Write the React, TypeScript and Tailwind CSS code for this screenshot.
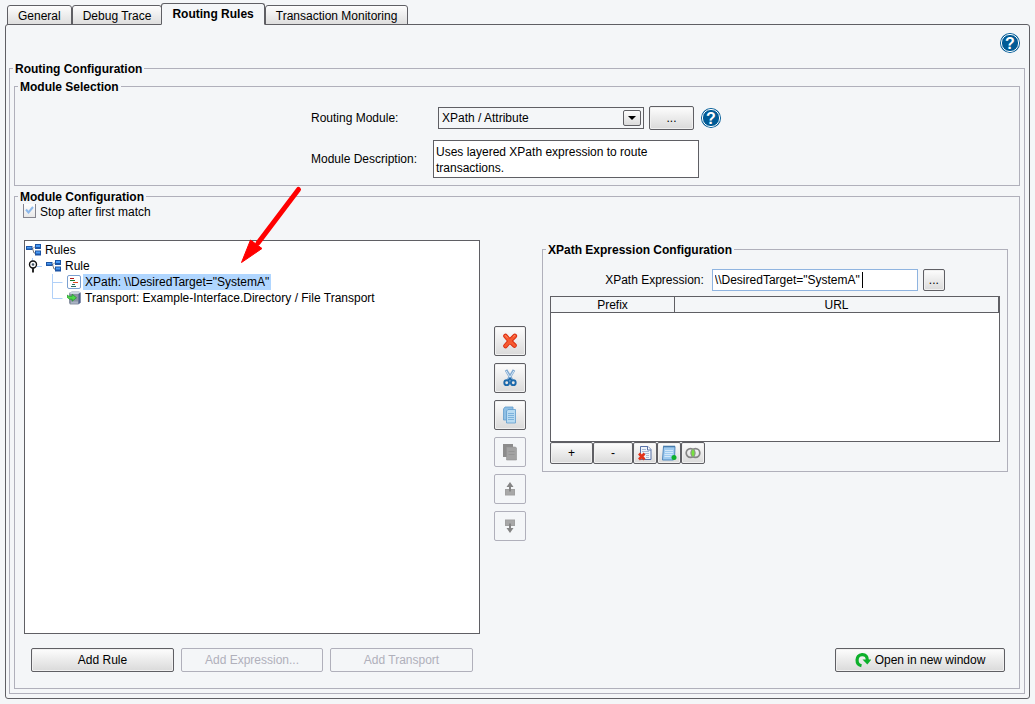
/**
 * Routing rules settings: tab strip, module selection, rule tree
 * and the XPath expression editor.
 */

import { useState } from "react";
import type { ReactNode } from "react";
import clsx from "clsx";

interface GroupBoxProps {
  title: string;
  className?: string;
  children: ReactNode;
}

// Titled border around a group of fields
function GroupBox({ title, className, children }: GroupBoxProps) {
  return (
    <fieldset className={clsx("min-w-0 border border-[#b0b0bb] px-1", className)}>
      <legend className="-ml-px px-0.5 pt-0.5 font-bold leading-[14px]">{title}</legend>
      {children}
    </fieldset>
  );
}

interface PushButtonProps {
  label?: string;
  className?: string;
  disabled?: boolean;
  children: ReactNode;
}

function PushButton({ label, className, disabled, children }: PushButtonProps) {
  return (
    <button
      type="button"
      aria-label={label}
      title={label}
      disabled={disabled}
      className={clsx(
        "flex shrink-0 items-center justify-center rounded-[2px] border",
        disabled
          ? "border-[#b0b0bb] text-[#b0b0bb]"
          : "border-[#5f5f64] bg-linear-to-b from-[#fdfdfd] to-[#dadada] shadow-[inset_0_0_0_1px_#f0f0f0]",
        className
      )}
    >
      {children}
    </button>
  );
}

function HelpIcon() {
  return (
    <svg width="20" height="20" viewBox="0 0 20 20">
      <circle cx="10" cy="10" r="10" fill="#005b96" />
      <circle cx="10" cy="10" r="8.6" fill="none" stroke="#fff" strokeWidth="1" />
      <text x="10" y="15.7" textAnchor="middle" fontSize="16" fontWeight="700" fill="#fff">
        ?
      </text>
    </svg>
  );
}

function HelpButton({ label }: { label: string }) {
  return (
    <button type="button" aria-label={label} className="size-5 shrink-0">
      <HelpIcon />
    </button>
  );
}

function RuleIcon() {
  return (
    <svg width="15" height="12" viewBox="0 0 15 12" className="shrink-0">
      <path d="M5 4.500h2l2-2h1M6.500 4.500L8 9h2" fill="none" stroke="#777" />
      <rect x="0" y="2" width="6.500" height="4" fill="#1d55a5" />
      <rect x="1" y="3" width="4.500" height="1.500" fill="#4a9bf5" />
      <rect x="9" y="0" width="6" height="5" fill="#1d55a5" />
      <rect x="10" y="1" width="4" height="2" fill="#4a9bf5" />
      <rect x="9" y="6.500" width="6" height="5" fill="#1d55a5" />
      <rect x="10" y="7.500" width="4" height="2" fill="#4a9bf5" />
    </svg>
  );
}

function ExpanderIcon() {
  return (
    <svg width="20" height="16" viewBox="0 0 20 16" className="shrink-0">
      <path d="M6.500 0v3M11 8.500h5" stroke="#b0d0f8" fill="none" />
      <circle cx="7" cy="6.500" r="3.500" fill="#fff" stroke="#111" strokeWidth="1.400" />
      <circle cx="7" cy="6.500" r="1.300" fill="#456" />
      <path d="M7 10v4.500" stroke="#111" strokeWidth="1.800" />
    </svg>
  );
}

function BranchLine({ last }: { last?: boolean }) {
  return (
    <svg width="41" height="16" viewBox="0 0 41 16" className="shrink-0">
      <path d={last ? "M26.500 0v8.500h10" : "M26.500 0v16M26.500 8.500h10"} stroke="#b0d0f8" fill="none" />
    </svg>
  );
}

function ExpressionIcon() {
  return (
    <svg width="14" height="14" viewBox="0 0 14 14" className="shrink-0">
      <rect x="0.500" y="0.500" width="13" height="13" rx="1.500" fill="#fff" stroke="#7ba0d0" />
      <path d="M3 3.500h4" stroke="#b01818" />
      <path d="M3 5.500h5" stroke="#1f7a30" />
      <path d="M6 7.500h5" stroke="#e04a20" />
      <path d="M5 9.500h3M4 11.500h5" stroke="#2d6f60" />
    </svg>
  );
}

function TransportIcon() {
  return (
    <svg width="14" height="14" viewBox="0 0 14 14" className="shrink-0">
      <path d="M2 2l3-1.500h7l1.500 1v10l-2.500 2H3L2 12z" fill="#8b93a3" />
      <path d="M2 2l3-1.500h7l1.500 1-2 1.500H4z" fill="#ccd4e0" />
      <path d="M11.500 3l2-1.500v10l-2 2z" fill="#4d5f8c" />
      <path d="M4 10.500h7v2H4z" fill="#a9b3c4" />
      <path d="M0 4l2 1.200h3.200V3.200l4.300 3.600-4.300 3.400V8.200H2.500L0 6.200z" fill="#4fd84a" stroke="#138a20" strokeWidth="0.600" />
    </svg>
  );
}

function DeleteIcon() {
  return (
    <svg width="16" height="16" viewBox="0 0 16 16" fill="none" strokeLinecap="round" strokeLinejoin="round">
      <path d="M3.500 3L7.800 8l4.700 4.500M12.800 3L7.800 8l-4.300 5" stroke="#d92c10" strokeWidth="4.600" />
      <path d="M3.500 3L7.800 8l4.700 4.500M12.800 3L7.800 8l-4.300 5" stroke="#f65a30" strokeWidth="2.800" />
      <path d="M3.500 2.600l1.800 2M11.500 3.400l1.300-1" stroke="#ff9068" />
    </svg>
  );
}

function CutIcon() {
  return (
    <svg width="16" height="18" viewBox="0 0 16 18" fill="none">
      <path d="M4 1L10 11M12 1L6 11" stroke="#7fa8d0" strokeWidth="2.800" />
      <path d="M4.200 2L9 10M11.800 2L7 10" stroke="#d5e6f5" strokeWidth="1" />
      <circle cx="4.700" cy="13.700" r="2.400" stroke="#1c69ab" strokeWidth="1.900" />
      <circle cx="11.300" cy="13.700" r="2.400" stroke="#1c69ab" strokeWidth="1.900" />
      <path d="M6.200 11.800L8 9.200l1.800 2.600" stroke="#1c69ab" strokeWidth="1.600" />
    </svg>
  );
}

function CopyIcon() {
  return (
    <svg width="16" height="18" viewBox="0 0 16 18">
      <path d="M3 1h8v13H1.500V3z" fill="#8fbfe4" stroke="#5f9ccd" strokeWidth="0.800" />
      <path d="M6 3.500h7.500V17h-9V5z" fill="#b8dbf2" stroke="#5f9ccd" strokeWidth="0.800" />
      <path d="M6 7.500h6M6 9.500h6M6 11.500h6M6 13.500h6" stroke="#7cb2dc" />
    </svg>
  );
}

function PasteIcon() {
  return (
    <svg width="16" height="18" viewBox="0 0 16 18">
      <path d="M1 1h10v13H1z" fill="#8c8c8c" />
      <path d="M4.500 4h9l1 1v12h-10z" fill="#a3a3a3" stroke="#929292" strokeWidth="0.600" />
      <path d="M6.500 8.500h6M6.500 11.500h6" stroke="#959595" />
    </svg>
  );
}

function MoveIcon({ down }: { down?: boolean }) {
  return (
    <svg width="12" height="14" viewBox="0 0 12 14" className={down ? "rotate-180" : undefined}>
      <rect x="1.500" y="7.500" width="9" height="5.500" fill="#a8a8a8" stroke="#a0a0a0" />
      <path d="M6 0l3.500 5H7v4.500H5V5H2.500z" fill="#858585" />
    </svg>
  );
}

function ClearPageIcon() {
  return (
    <svg width="16" height="16" viewBox="0 0 16 16">
      <path d="M3.500 1.500H11l3 3v10H3.500z" fill="#eef3fa" stroke="#5872a8" />
      <path d="M10.500 1.500v3.500H14" fill="#fff" stroke="#5872a8" />
      <path d="M5 4.500h4M5 6.500h7M7 8.500h5M9 10.500h3M9 12.500h3" stroke="#a9bad6" />
      <path d="M2 8.500l5.500 6M7.500 8.500l-5.500 6" stroke="#e3321b" strokeWidth="2.600" />
    </svg>
  );
}

function NotepadIcon() {
  return (
    <svg width="16" height="16" viewBox="0 0 16 16">
      <path d="M2.500 1.500h11.500l-.5 12.500-1 1H1.500z" fill="#9fcbf0" stroke="#4f87bd" />
      <path d="M2.500 1.500h11.500" stroke="#3f6f9c" strokeWidth="2" strokeDasharray="1 1" />
      <path d="M4 5.500h8M4 7.500h8M3.500 9.500h8M3.500 11.500h6" stroke="#d3e8fa" />
      <circle cx="13" cy="12.500" r="2.500" fill="#0db02b" />
    </svg>
  );
}

function OverlapIcon() {
  return (
    <svg width="16" height="14" viewBox="0 0 16 14" fill="none">
      <circle cx="5.500" cy="7" r="4.300" stroke="#858585" strokeWidth="1.700" />
      <circle cx="10.500" cy="7" r="4.300" stroke="#858585" strokeWidth="1.700" />
      <path d="M8 3c2.200 2.500 2.200 5.500 0 8-2.200-2.500-2.200-5.500 0-8z" fill="#76e33c" stroke="#8ab77a" strokeWidth="0.500" />
    </svg>
  );
}

function RefreshIcon() {
  return (
    <svg width="16" height="16" viewBox="0 0 16 16">
      <path d="M6.500 13.800C.5 12.500.5 3 7 2.600c3.800-.2 5.300 2.200 5.300 5.400" fill="none" stroke="#0db02b" strokeWidth="3.200" />
      <path d="M7.500 7.500H16.500l-4.200 5z" fill="#0db02b" />
    </svg>
  );
}

function PointerArrow() {
  return (
    <svg
      width="70"
      height="84"
      viewBox="0 0 70 84"
      className="pointer-events-none absolute -top-14 left-[212px]"
    >
      <path d="M62.500 5.500L22 59" stroke="#f00" strokeWidth="5" strokeLinecap="round" />
      <path d="M5.500 78.500L14.500 56l11.500 8.500z" fill="#f00" stroke="#f00" strokeLinejoin="round" />
    </svg>
  );
}

const tabs = ["General", "Debug Trace", "Routing Rules", "Transaction Monitoring"];

function TabStrip() {
  const [active, setActive] = useState("Routing Rules");

  return (
    <div role="tablist" className="relative z-10 -mb-px flex items-end pl-0.5">
      {tabs.map((tab) => (
        <button
          key={tab}
          type="button"
          role="tab"
          aria-selected={tab === active}
          onClick={() => setActive(tab)}
          className={clsx(
            "rounded-t-[3px] border border-[#5f5f64]",
            tab === active
              ? "-ml-px h-[22px] border-b-[#f4f6f8] bg-[#f4f6f8] px-2.5 font-bold"
              : "h-5 bg-linear-to-b from-[#fdfdfd] to-[#dedede] px-2.5 pt-px"
          )}
        >
          {tab}
        </button>
      ))}
    </div>
  );
}

function ModuleSelection() {
  return (
    <GroupBox title="Module Selection" className="mt-0.5 pb-[7px]">
      <div className="grid grid-cols-[122px_auto] items-center justify-center gap-y-2.5 pt-3 pr-0.5">
        <label htmlFor="module">Routing Module:</label>
        <div className="flex items-center pl-[5px]">
          <div className="relative mr-[5px]">
            <select
              id="module"
              className="h-[22px] w-[206px] appearance-none border border-[#5f5f64] bg-[#f4f6f8] px-[3px]"
            >
              <option>XPath / Attribute</option>
            </select>
            <span className="pointer-events-none absolute top-[3px] right-[3px] flex h-4 w-[18px] items-center justify-center rounded-[2px] border border-[#5f5f64] bg-linear-to-b from-[#fdfdfd] to-[#dadada]">
              <svg width="8" height="4" viewBox="0 0 8 4">
                <path d="M0 0h8L4 4z" />
              </svg>
            </span>
          </div>
          <PushButton label="Configure module" className="mr-[7px] h-6 w-[45px]">
            ...
          </PushButton>
          <HelpButton label="Module help" />
        </div>
        <label htmlFor="description">Module Description:</label>
        <textarea
          id="description"
          readOnly
          rows={2}
          defaultValue="Uses layered XPath expression to route transactions."
          className="block h-[38px] w-[266px] resize-none overflow-hidden border border-[#5f5f64] bg-white px-0.5 py-[3px] leading-4"
        />
      </div>
    </GroupBox>
  );
}

function RuleTree() {
  return (
    <div className="relative flex flex-col">
      <ul role="tree" className="min-h-[394px] flex-1 border border-[#5f5f64] bg-white pt-px pl-px leading-4">
        <li role="treeitem">
          <div className="flex h-4 items-center gap-1">
            <RuleIcon />
            Rules
          </div>
          <ul role="group">
            <li role="treeitem">
              <div className="flex h-4 items-center">
                <ExpanderIcon />
                <RuleIcon />
                <span className="pl-1">Rule</span>
              </div>
              <ul role="group">
                <li role="treeitem" aria-selected="true" className="flex h-4 items-center">
                  <BranchLine />
                  <ExpressionIcon />
                  <span className="ml-0.5 bg-[#b0d6ff] px-0.5">XPath: \\DesiredTarget="SystemA"</span>
                </li>
                <li role="treeitem" className="flex h-4 items-center">
                  <BranchLine last />
                  <TransportIcon />
                  <span className="ml-0.5 px-0.5">
                    Transport: Example-Interface.Directory / File Transport
                  </span>
                </li>
              </ul>
            </li>
          </ul>
        </li>
      </ul>
      <PointerArrow />
    </div>
  );
}

const treeActions = [
  { label: "Delete", icon: <DeleteIcon /> },
  { label: "Cut", icon: <CutIcon /> },
  { label: "Copy", icon: <CopyIcon /> },
  { label: "Paste", icon: <PasteIcon />, disabled: true },
  { label: "Move up", icon: <MoveIcon />, disabled: true },
  { label: "Move down", icon: <MoveIcon down />, disabled: true }
];

function ExpressionEditor() {
  const [expression, setExpression] = useState('\\\\DesiredTarget="SystemA"');

  return (
    <GroupBox title="XPath Expression Configuration" className="mt-px pb-[7px]">
      <div className="flex items-center justify-center pt-3">
        <label htmlFor="expression" className="mr-2">
          XPath Expression:
        </label>
        <div className="relative mr-[5px]">
          <input
            id="expression"
            type="text"
            value={expression}
            onChange={(e) => setExpression(e.target.value)}
            className="block h-[22px] w-[206px] border border-[#8fb4e0] bg-white px-0.5 outline-none"
          />
          <span className="pointer-events-none absolute top-[3px] left-[150px] h-4 w-px bg-black" />
        </div>
        <PushButton label="Edit expression" className="h-[22px] w-[22px]">
          ...
        </PushButton>
      </div>
      <div className="mx-[3px] mt-[5px]">
        <div className="h-[146px] border border-[#5f5f64] bg-white">
          <table className="w-full table-fixed border-separate border-spacing-0">
            <thead className="bg-[#f4f6f8]">
              <tr className="leading-[14px]">
                <th className="w-[124px] border-r border-b border-[#5f5f64] pt-px font-normal">Prefix</th>
                <th className="border-r border-b border-[#5f5f64] pt-px font-normal">URL</th>
              </tr>
            </thead>
          </table>
        </div>
        <div className="flex">
          <PushButton label="Add namespace" className="h-[22px] w-[43px]">
            +
          </PushButton>
          <PushButton label="Remove namespace" className="h-[22px] w-10">
            -
          </PushButton>
          <PushButton label="Clear namespaces" className="h-[22px] w-6">
            <ClearPageIcon />
          </PushButton>
          <PushButton label="Load namespaces" className="h-[22px] w-6">
            <NotepadIcon />
          </PushButton>
          <PushButton label="Merge namespaces" className="h-[22px] w-6">
            <OverlapIcon />
          </PushButton>
        </div>
      </div>
    </GroupBox>
  );
}

function ModuleConfiguration() {
  const [stopAfterMatch, setStopAfterMatch] = useState(true);

  return (
    <GroupBox title="Module Configuration" className="mt-0.5 pb-4">
      <div className="relative flex h-4 items-start gap-1 pl-1">
        <input
          id="stop"
          type="checkbox"
          checked={stopAfterMatch}
          onChange={(e) => setStopAfterMatch(e.target.checked)}
          className="peer h-3.5 w-[13px] appearance-none border border-t-0 border-[#85858f] bg-linear-to-b from-white to-[#e8e8e8]"
        />
        <svg
          width="9"
          height="8"
          viewBox="0 0 9 8"
          className="pointer-events-none absolute top-0.5 left-1.5 hidden peer-checked:block"
        >
          <path d="M1 3.500l2.500 3L8 1" fill="none" stroke="#8cb8ea" strokeWidth="2" />
        </svg>
        <label htmlFor="stop" className="leading-4">
          Stop after first match
        </label>
      </div>

      <div className="mt-5 mr-[7px] ml-[5px] grid grid-cols-[456fr_62px_466fr]">
        <RuleTree />
        <div className="flex flex-col gap-[7px] pt-[86px] pl-3.5">
          {treeActions.map((action) => (
            <PushButton
              key={action.label}
              label={action.label}
              disabled={action.disabled}
              className="h-[30px] w-8"
            >
              {action.icon}
            </PushButton>
          ))}
        </div>
        <div>
          <ExpressionEditor />
        </div>
      </div>

      <div className="mt-3.5 mr-2.5 ml-3 flex gap-[7px]">
        <PushButton className="h-6 w-[143px]">Add Rule</PushButton>
        <PushButton className="h-6 w-[142px]" disabled>
          Add Expression...
        </PushButton>
        <PushButton className="h-6 w-[143px]" disabled>
          Add Transport
        </PushButton>
        <PushButton className="ml-auto h-6 w-[170px] gap-1">
          <RefreshIcon />
          Open in new window
        </PushButton>
      </div>
    </GroupBox>
  );
}

export default function App() {
  return (
    <div className="min-h-screen bg-[#f4f6f8] px-[5px] pt-[3px] pb-[5px] font-['Liberation_Sans',Arial,sans-serif] text-xs text-black">
      <TabStrip />
      <main className="rounded-[3px] border border-[#5f5f64] pt-2 pr-1 pb-1 pl-[3px]">
        <div className="flex justify-end pr-[5px] pb-[7px]">
          <HelpButton label="Routing help" />
        </div>
        <GroupBox title="Routing Configuration" className="pb-1">
          <ModuleSelection />
          <ModuleConfiguration />
        </GroupBox>
      </main>
    </div>
  );
}
